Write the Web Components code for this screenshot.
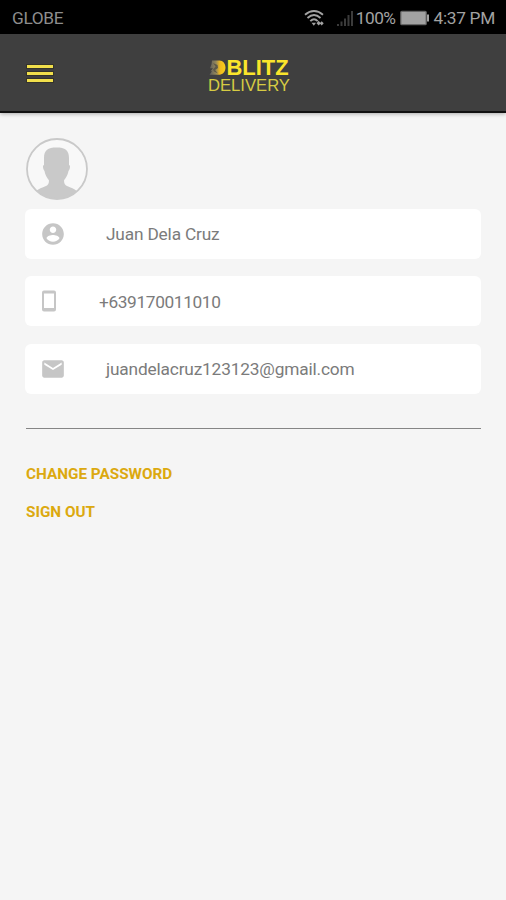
<!DOCTYPE html>
<html lang="en">
<head>
<meta charset="utf-8">
<title>Blitz Delivery</title>
<style>
    body {
        margin: 0;
        background: #f5f5f5;
        font-family: Roboto, "Liberation Sans", sans-serif;
    }
</style>
</head>
<body>
<profile-page>
    <status-bar carrier="GLOBE" battery="100%" time="4:37 PM"></status-bar>
    <app-header></app-header>
    <user-avatar></user-avatar>
    <profile-field icon="account">Juan Dela Cruz</profile-field>
    <profile-field icon="phone">+639170011010</profile-field>
    <profile-field icon="mail">juandelacruz123123@gmail.com</profile-field>
    <action-link slot="actions">CHANGE PASSWORD</action-link>
    <action-link slot="actions">SIGN OUT</action-link>
</profile-page>

<script>
/**
 * @param {string} name
 * @param {string} html
 */
function define(name, html) {
    const template = document.createElement("template");
    template.innerHTML = html;

    window.customElements.define(name, class extends HTMLElement {
        constructor() {
            super();
            this.attachShadow({ mode: "open" });
            this.shadowRoot.append(template.content.cloneNode(true));
        };

        connectedCallback() {
            // fill every [data-attr] with the attribute of the same name
            for (const el of this.shadowRoot.querySelectorAll("[data-attr]")) {
                el.textContent = this.getAttribute(el.dataset.attr);
            };
        };
    });
};

define("status-bar", `
    <style>
        :host {
            display: flex;
            align-items: center;
            box-sizing: border-box;
            height: 34px;
            padding: 2px 11px 0 12px;
            background: #000;
            color: #a2a2a2;
            font-size: 17.3px;
            line-height: 20px;
            white-space: nowrap;
        }
        .carrier { flex: 1; color: #8e8e8e; letter-spacing: -0.35px; }
        .wifi { margin-right: 11px; }
        .signal { margin-right: 2px; }
        .percent { letter-spacing: -0.5px; }
        .battery { margin: 0 4px 0 4px; }
        .time { letter-spacing: -0.3px; }
        svg { display: block; }
    </style>
    <span class="carrier" data-attr="carrier"></span>
    <svg class="wifi" width="21" height="18" viewBox="0 0 21 18" fill="none" stroke="#a2a2a2" stroke-width="1.9">
        <path d="M1 5.700Q10 -1.700 19 5.700M3.500 9Q10 3.200 16.500 9M6.300 12.200Q10 8.500 13.700 12.200"/>
        <path fill="#a2a2a2" stroke="none" d="M7.500 13.700h4.500l-2.200 3zM12.500 14.300l2.200-2.600 2 2.600-2 2.200zM15.700 14.300l2-2 2 2-2 2.200z"/>
    </svg>
    <svg class="signal" width="18" height="17" viewBox="0 0 18 17" fill="#3b3b3b">
        <path d="M1 14h2v2H1zM4.500 11.500h2V16h-2zM8 8.500h2V16H8zM11.500 5h2v11h-2zM15 1h2v15h-2z"/>
    </svg>
    <span class="percent" data-attr="battery"></span>
    <svg class="battery" width="30" height="16" viewBox="0 0 30 16">
        <rect x=".8" y="1.300" width="25.400" height="13.400" rx="1" fill="#a2a2a2" stroke="#666" stroke-width="1.200"/>
        <path fill="#a2a2a2" d="M27 4.500h2v7h-2z"/>
    </svg>
    <span class="time" data-attr="time"></span>
`);

define("blitz-logo", `
    <style>
        :host { display: block; }
        svg { display: block; overflow: visible; }
        text { font-family: "Liberation Sans", Arial, sans-serif; }
    </style>
    <svg width="84" height="46" viewBox="0 0 84 46">
        <defs>
            <linearGradient id="fade">
                <stop offset="0" stop-color="#5c5c5c"/>
                <stop offset=".4" stop-color="#94875a"/>
                <stop offset=".65" stop-color="#eeb91e"/>
                <stop offset="1" stop-color="#f8cf18"/>
            </linearGradient>
        </defs>
        <path fill="url(#fade)" d="M4 10.500h7.500c3.500 0 6 3.300 6 7s-2.500 7.200-6 7.200H1.500l2.500-3.500H2.500l2.500-3H2l1.500-4z"/>
        <path fill="#5d594a" d="M5 13l4.500 2 .5 3-3 2 3 3.500-4-2-1-2 2.500-3z"/>
        <g transform="translate(18.500 25) scale(1.030 1)">
            <text font-size="21.300" font-weight="700" fill="#fbe52b">BLITZ</text>
        </g>
        <g transform="translate(0 41) scale(1.040 1)">
            <text font-size="16" fill="#d6cb43">DELIVERY</text>
        </g>
    </svg>
`);

define("app-header", `
    <style>
        :host {
            display: grid;
            grid-template-columns: 1fr auto 1fr;
            align-items: center;
            box-sizing: border-box;
            height: 79px;
            padding: 0 26px;
            background: #3f3f3f;
            border-bottom: 2px solid #111;
            box-shadow: 0 1px 4px rgba(0, 0, 0, .3);
        }
        .menu {
            display: grid;
            gap: 4px;
            width: 28px;
            padding: 5px 1px 3px;
            box-sizing: border-box;
        }
        .menu i { height: 3px; background: #f1df4b; outline: 1px solid #34332b; }
        blitz-logo { margin-left: -6px; }
    </style>
    <div class="menu"><i></i><i></i><i></i></div>
    <blitz-logo></blitz-logo>
`);

define("user-avatar", `
    <style>
        :host { display: block; width: 62px; height: 62px; }
        svg { display: block; }
    </style>
    <svg width="62" height="62" viewBox="0 0 62 62">
        <clipPath id="round"><circle cx="31" cy="31" r="30"/></clipPath>
        <circle cx="31" cy="31" r="30" fill="#f8f8f8"/>
        <path clip-path="url(#round)" fill="#c9c9c9" d="M30.500 9.500C39 9.500 43 12 43 20v7c1.500 0 1.300 4-.5 6-1 5-3 7-4.500 9.500 0 3 1 4.500 3 5.500 5 2 8 3 12 7v8H8v-8c4-4 7-5 12-7 2-1 3-2.500 3-5.500-1.500-2.500-3.500-4.500-4.500-9.500-1.800-2-2-6-.5-6v-7c0-8 4-10.500 12.500-10.500z"/>
        <circle cx="31" cy="31" r="30" fill="none" stroke="#c9c9c9" stroke-width="1.800"/>
    </svg>
`);

const icons = {
    account: `<svg width="26" height="26" viewBox="0 0 24 24"><path d="M12 2C6.480 2 2 6.480 2 12s4.480 10 10 10 10-4.480 10-10S17.520 2 12 2zm0 3c1.660 0 3 1.340 3 3s-1.340 3-3 3-3-1.340-3-3 1.340-3 3-3zm0 14.200c-2.500 0-4.710-1.280-6-3.220.03-1.990 4-3.080 6-3.080 1.990 0 5.970 1.090 6 3.080-1.290 1.940-3.500 3.220-6 3.220z"/></svg>`,
    phone: `<svg width="19" height="24" viewBox="0 0 19 24"><path fill-rule="evenodd" d="M4 1.500h10q2 0 2 2v17q0 2-2 2H4q-2 0-2-2v-17q0-2 2-2zM4 4.500v14.500h10V4.500z"/></svg>`,
    mail: `<svg width="26" height="26" viewBox="0 0 24 24"><path d="M20 4H4c-1.100 0-1.990.9-1.990 2L2 18c0 1.100.9 2 2 2h16c1.100 0 2-.9 2-2V6c0-1.100-.9-2-2-2zm0 4l-8 5-8-5V6l8 5 8-5v2z"/></svg>`,
};

const fieldTemplate = document.createElement("template");
fieldTemplate.innerHTML = `
    <style>
        :host {
            display: flex;
            align-items: center;
            box-sizing: border-box;
            height: 50px;
            padding-left: 15px;
            background: #fff;
            border-radius: 6px;
            color: #7b7b7b;
            font-size: 17.300px;
            line-height: 22px;
            letter-spacing: -0.170px;
        }
        :host([icon="phone"]) { letter-spacing: -0.370px; }
        :host([icon="phone"]) .value { padding-top: 2px; }
        .icon { margin-right: 40px; }
        svg { display: block; fill: #c6c6c6; }
    </style>
    <span class="icon"></span>
    <span class="value"><slot></slot></span>
`;

window.customElements.define("profile-field", class ProfileField extends HTMLElement {
    constructor() {
        super();
        this.attachShadow({ mode: "open" });
        this.shadowRoot.append(fieldTemplate.content.cloneNode(true));
    };

    connectedCallback() {
        this.shadowRoot.querySelector(".icon").innerHTML = icons[this.getAttribute("icon")];
    };
});

define("action-link", `
    <style>
        :host {
            display: block;
            color: #dca90f;
            font-size: 15.300px;
            font-weight: 700;
            line-height: 20px;
        }
    </style>
    <slot></slot>
`);

define("profile-page", `
    <style>
        :host { display: block; min-height: 900px; background: #f5f5f5; }
        ::slotted(user-avatar) { margin: 25px 0 9px 26px; }
        ::slotted(profile-field) { margin: 0 25px 17px; }
        ::slotted(profile-field[icon="phone"]) { margin-bottom: 18px; }
        hr { height: 1px; margin: 34px 25px 35px 26px; border: 0; background: #858585; }
        .actions { display: grid; gap: 18px; padding: 0 26px; }
    </style>
    <slot></slot>
    <hr>
    <div class="actions"><slot name="actions"></slot></div>
`);
</script>
</body>
</html>
